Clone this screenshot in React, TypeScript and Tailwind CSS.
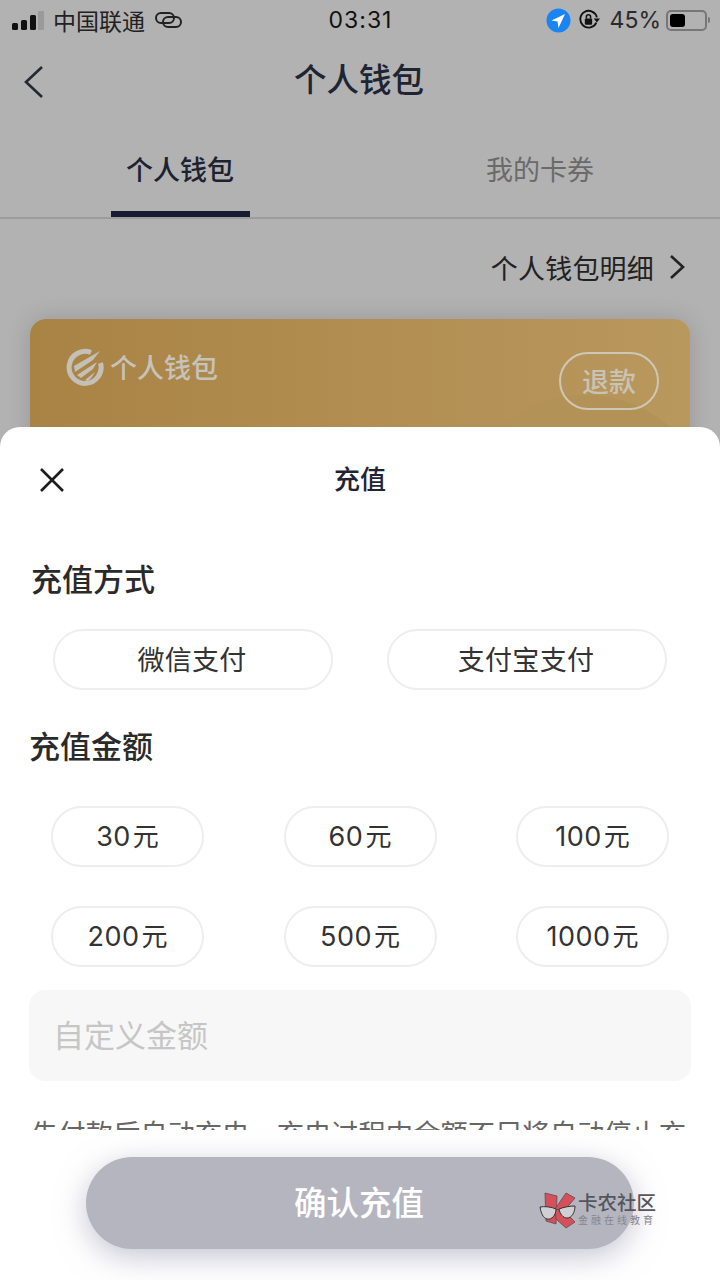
import React from "react";

const cjk = { fontFamily: '"Noto Sans CJK SC", "Noto Sans", sans-serif' };

const Pill = ({ label, className }: { label: React.ReactNode; className: string }) => (
  <div
    className={`flex h-[61px] items-center justify-center rounded-full border-2 border-[#eeeeee] text-[27px] text-[#333333] ${className}`}
  >
    {label}
  </div>
);

const Amount = ({ value }: { value: string }) => (
  <Pill
    className="w-[153px]"
    label={
      <span className="flex items-baseline">
        <span className="text-[27px] tracking-[0.5px]" style={{ fontFamily: "Inter, sans-serif" }}>
          {value}
        </span>
        <span className="ml-[2px] text-[26px]">元</span>
      </span>
    }
  />
);

const StatusBar = () => (
  <div className="flex h-[40px] items-center justify-between pl-[12px] pr-[10px] text-[#111111]">
    <div className="flex w-[197px] items-center">
      <svg width="32" height="19" viewBox="0 0 32 19">
        <rect x="0" y="12" width="6" height="7" rx="1.5" fill="#111" />
        <rect x="9" y="9" width="6" height="10" rx="1.5" fill="#111" />
        <rect x="18" y="4" width="6" height="15" rx="1.5" fill="#111" />
        <rect x="26" y="0" width="6" height="19" rx="1" fill="#9a9a9a" />
      </svg>
      <span className="ml-[9px] text-[23px] leading-none text-[#222222]">中国联通</span>
      <svg className="ml-[10px]" width="27" height="16" viewBox="0 0 27 16" fill="none" stroke="#222" strokeWidth="2">
        <rect x="1" y="1" width="18" height="10" rx="5" />
        <rect x="8" y="5" width="18" height="10" rx="5" />
      </svg>
    </div>
    <span className="text-[23px] tracking-[1px] text-[#111111]" style={{ fontFamily: "Inter, sans-serif" }}>
      03:31
    </span>
    <div className="flex w-[198px] items-center justify-end">
      <svg width="25" height="25" viewBox="0 0 25 25">
        <circle cx="12.5" cy="12.5" r="12" fill="#1a84f2" />
        <path d="M19 6 L5.5 12.5 L11.5 13.5 L12.5 20 Z" fill="#ffffff" />
      </svg>
      <svg className="ml-[7px]" width="22" height="22" viewBox="0 0 21 21" fill="none">
        <path d="M17.5 13A8 8 0 1 1 18 8" stroke="#111" strokeWidth="1.8" />
        <path d="M15 9h6l-3 4z" fill="#111" />
        <rect x="6.5" y="9" width="7" height="6" rx="1" fill="#111" />
        <path d="M8 9V7.5a2 2 0 0 1 4 0V9" stroke="#111" strokeWidth="1.5" />
      </svg>
      <span className="ml-[10px] text-[23px] leading-none text-[#2a2a2a]" style={{ fontFamily: "Inter, sans-serif" }}>
        45%
      </span>
      <div className="ml-[5px] flex items-center">
        <div className="flex h-[21px] w-[41px] items-center rounded-[5px] border-2 border-[#777777] p-[2px]">
          <div className="h-full w-[15px] rounded-[3px] bg-black" />
        </div>
        <div className="ml-[1px] h-[6px] w-[2px] rounded-r bg-[#777777]" />
      </div>
    </div>
  </div>
);

const Backdrop = () => (
  <div className="flex h-[1280px] flex-col bg-[#b2b2b2]">
    <StatusBar />
    <div className="relative flex h-[82px] items-center justify-center pb-[5px] pr-[2px]">
      <svg className="absolute left-[23px] top-[25px]" width="22" height="34" viewBox="0 0 22 34" fill="none" stroke="#24282f" strokeWidth="2.6">
        <path d="M19 2 3 17l16 15" />
      </svg>
      <span className="text-[32.5px] font-medium leading-none text-[#1e2433]">个人钱包</span>
    </div>
    <div className="flex h-[97px] border-b-2 border-[#9c9c9c]">
      <div className="flex w-[360px] flex-col items-center">
        <span className="mt-[27px] text-[27px] font-medium leading-[40px] text-[#1c2230]">个人钱包</span>
        <div className="mt-auto h-[6px] w-[139px] bg-[#171c33]" />
      </div>
      <div className="flex w-[360px] justify-center">
        <span className="mt-[27px] text-[27px] leading-[40px] text-[#6a6a6a]">我的卡券</span>
      </div>
    </div>
    <div className="flex h-[100px] items-center justify-end pb-[4px] pr-[34px]">
      <span className="text-[27px] leading-none tracking-[0.2px] text-[#222222]">个人钱包明细</span>
      <svg className="ml-[14px]" width="18" height="26" viewBox="0 0 18 26" fill="none" stroke="#222" strokeWidth="2.6">
        <path d="M3 2l12 11L3 24" />
      </svg>
    </div>
    <div className="relative mx-[30px] h-[300px] overflow-hidden rounded-[16px] bg-gradient-to-r from-[#a98344] to-[#b9985e] shadow-[0_0_24px_rgba(0,0,0,0.15)]">
      <div className="absolute left-[425px] top-[76px] h-[260px] w-[260px] rounded-full bg-[#b39257]" />
      <div className="relative flex items-start justify-between pl-[36px] pr-[31px] pt-[33px]">
        <div className="-mt-[4px] flex items-center">
          <svg width="38" height="38" viewBox="0 0 38 38" fill="none">
            <path d="M25 4.5A16 16 0 1 0 34.5 15" stroke="#c3c0b8" strokeWidth="5" />
            <path d="M8 18 34 3 27 12 9 24Z" fill="#c3c0b8" />
            <path d="M11 27 31 14 27 21 15 30Z" fill="#c3c0b8" />
            <path d="M19 32 29 24 26 29 22 33Z" fill="#c3c0b8" />
          </svg>
          <span className="ml-[6px] pb-[2px] text-[27px] font-medium leading-none text-[#c6c3bb]">个人钱包</span>
        </div>
        <div className="flex h-[58px] w-[100px] items-center justify-center rounded-full border-2 border-[#cfc7b5] text-[27px] font-medium text-[#c9c3b6]">
          退款
        </div>
      </div>
    </div>
  </div>
);

const Sheet = () => (
  <div className="absolute inset-x-0 bottom-0 top-[427px] overflow-hidden rounded-t-[20px] bg-white">
    <div className="relative flex h-[102px] items-center justify-center">
      <svg className="absolute left-[39px] top-[40px]" width="26" height="26" viewBox="0 0 26 26" stroke="#1c1c1c" strokeWidth="2.6">
        <path d="M2 2l22 22M24 2 2 24" />
      </svg>
      <span className="text-[26px] font-medium leading-none text-[#1e2433]">充值</span>
    </div>
    <div className="px-[29px]">
      <h2 className="mt-[27px] pl-[2px] text-[31px] font-medium leading-[44px] text-[#2a2a2a]">充值方式</h2>
      <div className="mt-[29px] flex justify-between px-[24px]">
        <Pill className="w-[280px]" label={<span className="pr-[2px] tracking-[0.3px]">微信支付</span>} />
        <Pill className="w-[280px]" label={<span className="pr-[2px] tracking-[0.3px]">支付宝支付</span>} />
      </div>
      <h2 className="mt-[33px] text-[31px] font-medium leading-[44px] text-[#2a2a2a]">充值金额</h2>
      <div className="mt-[39px] grid grid-cols-[153px_153px_153px] justify-between gap-y-[39px] px-[22px]">
        {["30", "60", "100", "200", "500", "1000"].map((v) => (
          <Amount key={v} value={v} />
        ))}
      </div>
      <div className="mt-[23px] flex h-[91px] items-center rounded-[16px] bg-[#f7f7f7] pb-[2px] pl-[24px] text-[31px] text-[#c6c6c6]">
        自定义金额
      </div>
      <p className="mt-[31px] whitespace-nowrap pl-[2px] text-[27.3px] leading-[40px] text-[#666666]">
        先付款后自动充电，充电过程中余额不足将自动停止充
      </p>
    </div>
  </div>
);

const Watermark = () => (
  <div className="absolute left-[538px] top-[1191px] flex items-center">
    <svg width="40" height="38" viewBox="0 0 40 38">
      <path d="M7 2 19 5 18 33 8 30Z" fill="#d6505b" stroke="#5e4a50" strokeWidth="0.8" />
      <path d="M28 2 37 7 26 20 17 18Z" fill="#d6505b" stroke="#5e4a50" strokeWidth="0.8" />
      <path d="M17 18 26 20 37 31 28 37 18 28Z" fill="#d6505b" stroke="#5e4a50" strokeWidth="0.8" />
      <path d="M2 16C6 15 14 16 18 18 18 24 14 29 9 28 5 27 3 22 2 16Z" fill="#d0d0d4" stroke="#333" strokeWidth="1" />
      <path d="M21 18C26 16 32 15 37 15 37 21 34 27 29 27 25 27 22 23 21 18Z" fill="#d0d0d4" stroke="#333" strokeWidth="1" />
    </svg>
    <div className="-mt-[2px] flex flex-col">
      <span className="text-[19.5px] font-medium leading-[22px] text-[#55555c]">卡农社区</span>
      <span className="text-[10px] leading-[14px] tracking-[3px] text-[#85858c]">金融在线教育</span>
    </div>
  </div>
);

export default function App() {
  return (
    <div className="relative h-[1280px] w-[720px] overflow-hidden" style={cjk}>
      <Backdrop />
      <Sheet />
      <div className="absolute inset-x-0 bottom-0 top-[1130px] flex justify-center bg-white pt-[27px]">
        <div className="flex h-[92px] w-[548px] items-center justify-center rounded-full bg-[#b5b5c0] pb-[3px] pr-[2px] text-[32.5px] font-medium text-white shadow-[0_8px_30px_rgba(150,150,175,0.55)]">
          确认充值
        </div>
      </div>
      <Watermark />
    </div>
  );
}
